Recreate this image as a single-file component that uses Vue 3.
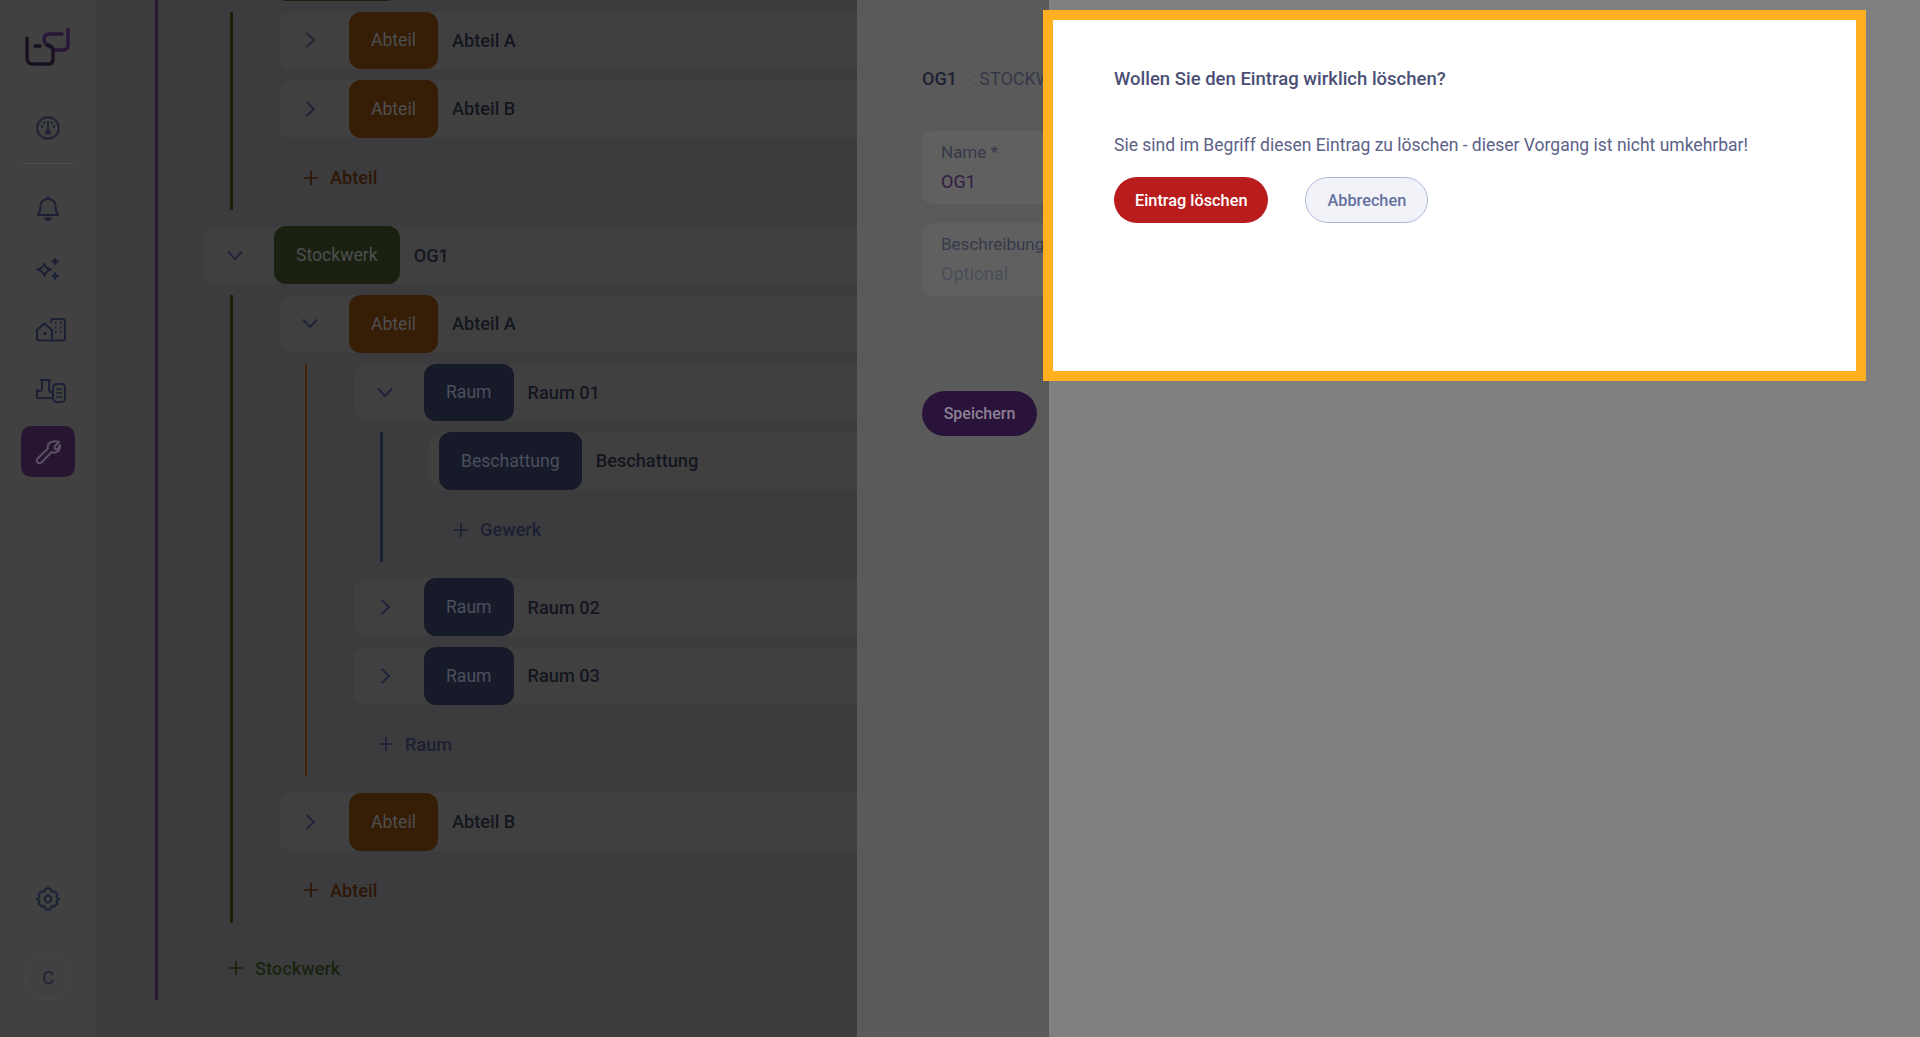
<script setup>
const navIcons = ["bell", "spark", "building", "plant"];
</script>

<template>
  <div class="app">
    <aside class="sidebar">
      <svg class="logo" width="48" height="40" viewBox="0 0 48 40" fill="none" stroke-width="3.400" stroke-linecap="round">
        <path d="M44 1V17Q44 22 39 22H30" stroke="#2a1638" />
        <path d="M38 6H26Q20 6 20 11Q20 17 27 19" stroke="#2a1638" />
        <path d="M3 10V30Q3 36 9 36H25Q29 36 29 31V23Q29 18 24 17" stroke="#191020" />
        <path d="M11 18H16" stroke="#191020" />
      </svg>

      <button class="nav-item dash" type="button">
        <svg width="26" height="26" viewBox="0 0 26 26" fill="none" stroke="#1c2135" stroke-width="2">
          <circle cx="13" cy="13" r="10.800" />
          <path d="M13 6V14" />
          <circle cx="13" cy="17" r="1.800" fill="#1c2135" />
          <path d="M7 11V12M19 11V12M9 7.500V8M17 7.500V8" stroke-linecap="round" />
        </svg>
      </button>
      <div class="divider"></div>

      <button v-for="name in navIcons" :key="name" class="nav-item" type="button">
        <svg v-if="name === 'bell'" width="26" height="28" viewBox="0 0 26 28" fill="none" stroke="#1c2135" stroke-width="2" stroke-linejoin="round">
          <path d="M3 21H23C21 18.500 20.500 17 20.500 12.500C20.500 8 17.500 5 13 5C8.500 5 5.500 8 5.500 12.500C5.500 17 5 18.500 3 21Z" />
          <path d="M13 2V5" />
          <path d="M10 24.500H16Q13 27.500 10 24.500Z" fill="#1c2135" />
        </svg>
        <svg v-else-if="name === 'spark'" width="26" height="26" viewBox="0 0 26 26" fill="none" stroke="#1c2135" stroke-width="2" stroke-linejoin="round">
          <path d="M9.500 7.500Q10.500 12.500 16 13.500Q10.500 15 9.500 20Q8.500 15 2 13.500Q8.500 12.500 9.500 7.500Z" />
          <path d="M20 2Q20.500 5 24 5.500Q20.500 6 20 9Q19.500 6 16.500 5.500Q19.500 5 20 2Z" fill="#1c2135" stroke-width="1" />
          <path d="M20 16.500Q20.500 19.500 24 20Q20.500 20.500 20 24Q19.500 20.500 16.500 20Q19.500 19.500 20 16.500Z" fill="#1c2135" stroke-width="1" />
        </svg>
        <svg v-else-if="name === 'building'" class="wide" width="30" height="24" viewBox="0 0 30 24" fill="none" stroke="#1c2135" stroke-width="2.200" stroke-linejoin="round">
          <path d="M1 12L8.500 5.500L16 12V22.500H3Q1 22.500 1 20.500Z" />
          <circle cx="9" cy="15.500" r="1.700" fill="#1c2135" stroke="none" />
          <path d="M15 5V3Q15 1 17 1H27Q29 1 29 3V20.500Q29 22.500 27 22.500H16" />
          <path d="M19 5H20.500M24 5H25.500M19 9.500H20.500M24 9.500H25.500M19 14H20.500M24 14H25.500" stroke-width="2.400" />
        </svg>
        <svg v-else class="wide" width="30" height="26" viewBox="0 0 30 26" fill="none" stroke="#1c2135" stroke-width="2" stroke-linejoin="round">
          <path d="M4 2H15M6 2V10Q6 13 3 13H1M1 11V20H16M13 2V11Q13 14 16 15" />
          <rect x="17" y="6" width="12" height="18" rx="3.500" />
          <path d="M20 11H26M20 15H26M20 19H26" stroke-width="1.500" />
        </svg>
      </button>

      <button class="nav-item active" type="button">
        <svg width="26" height="26" viewBox="0 0 26 26" fill="none" stroke="#5a5064" stroke-width="2" stroke-linejoin="round">
          <path d="M16 3Q21 1.500 24 3L19.500 7.500L20 10L22.500 10.500L25 6Q25.500 12 20.500 13.500Q18.500 14 16.500 13L6.500 23.500Q4.500 25 2.500 23.500Q1 21.500 2.500 19.500L13 9.500Q12 4.500 16 3Z" />
        </svg>
      </button>

      <button class="nav-item gear" type="button">
        <svg width="26" height="26" viewBox="0 0 26 26" fill="none" stroke="#1c2135" stroke-width="2" stroke-linejoin="round">
          <path d="M13 2L16 3.500L16.800 6L19.500 5.500L22.500 8.500L21.500 11L24 13L21.500 15L22.500 17.500L19.500 20.500L16.800 20L16 22.500L13 24L10 22.500L9.200 20L6.500 20.500L3.500 17.500L4.500 15L2 13L4.500 11L3.500 8.500L6.500 5.500L9.200 6L10 3.500Z" />
          <circle cx="13" cy="13" r="3.400" />
        </svg>
      </button>
      <div class="avatar">C</div>
    </aside>

    <main class="tree-area">
      <div class="tree">
        <div class="node">
          <!-- scrolled almost out of view, only the lower edge of the badge shows -->
          <div class="row"><span class="toggle"></span><span class="badge green stub"></span></div>
          <div class="children line-green">
            <div class="row"><span class="toggle"><svg class="chev" width="11" height="16" viewBox="0 0 11 16"><path d="M1.500 1L9 8L1.500 15" /></svg></span><span class="badge orange">Abteil</span><span class="name">Abteil A</span></div>
            <div class="row"><span class="toggle"><svg class="chev" width="11" height="16" viewBox="0 0 11 16"><path d="M1.500 1L9 8L1.500 15" /></svg></span><span class="badge orange">Abteil</span><span class="name">Abteil B</span></div>
            <div class="add add-orange"><svg class="plus" width="14" height="14" viewBox="0 0 14 14"><path d="M7 0V14M0 7H14" /></svg>Abteil</div>
          </div>
        </div>

        <div class="node">
          <div class="row"><span class="toggle"><svg class="chev" width="16" height="11" viewBox="0 0 16 11"><path d="M1 1.500L8 9L15 1.500" /></svg></span><span class="badge green">Stockwerk</span><span class="name">OG1</span></div>
          <div class="children line-green">
            <div class="node">
              <div class="row"><span class="toggle"><svg class="chev" width="16" height="11" viewBox="0 0 16 11"><path d="M1 1.500L8 9L15 1.500" /></svg></span><span class="badge orange">Abteil</span><span class="name">Abteil A</span></div>
              <div class="children line-orange">
                <div class="node">
                  <div class="row"><span class="toggle"><svg class="chev" width="16" height="11" viewBox="0 0 16 11"><path d="M1 1.500L8 9L15 1.500" /></svg></span><span class="badge navy">Raum</span><span class="name">Raum 01</span></div>
                  <div class="children line-navy">
                    <div class="row leaf"><span class="badge navy">Beschattung</span><span class="name">Beschattung</span></div>
                    <div class="add add-navy"><svg class="plus" width="14" height="14" viewBox="0 0 14 14"><path d="M7 0V14M0 7H14" /></svg>Gewerk</div>
                  </div>
                </div>
                <div class="row"><span class="toggle"><svg class="chev" width="11" height="16" viewBox="0 0 11 16"><path d="M1.500 1L9 8L1.500 15" /></svg></span><span class="badge navy">Raum</span><span class="name">Raum 02</span></div>
                <div class="row"><span class="toggle"><svg class="chev" width="11" height="16" viewBox="0 0 11 16"><path d="M1.500 1L9 8L1.500 15" /></svg></span><span class="badge navy">Raum</span><span class="name">Raum 03</span></div>
                <div class="add add-navy"><svg class="plus" width="14" height="14" viewBox="0 0 14 14"><path d="M7 0V14M0 7H14" /></svg>Raum</div>
              </div>
            </div>
            <div class="row"><span class="toggle"><svg class="chev" width="11" height="16" viewBox="0 0 11 16"><path d="M1.500 1L9 8L1.500 15" /></svg></span><span class="badge orange">Abteil</span><span class="name">Abteil B</span></div>
            <div class="add add-orange"><svg class="plus" width="14" height="14" viewBox="0 0 14 14"><path d="M7 0V14M0 7H14" /></svg>Abteil</div>
          </div>
        </div>

        <div class="add add-green"><svg class="plus" width="14" height="14" viewBox="0 0 14 14"><path d="M7 0V14M0 7H14" /></svg>Stockwerk</div>
      </div>
    </main>

    <section class="detail">
      <div class="detail-inner">
        <h2 class="detail-title"><strong>OG1</strong><span class="sep">:</span><span>STOCKWERK</span></h2>
        <div class="field">
          <label>Name *</label>
          <div class="value">OG1</div>
        </div>
        <div class="field">
          <label>Beschreibung</label>
          <div class="value placeholder">Optional</div>
        </div>
        <button class="save" type="button">Speichern</button>
      </div>
    </section>

    <section class="drawer">
      <div class="modal">
        <h3>Wollen Sie den Eintrag wirklich löschen?</h3>
        <p>Sie sind im Begriff diesen Eintrag zu löschen - dieser Vorgang ist nicht umkehrbar!</p>
        <div class="actions">
          <button class="btn danger" type="button">Eintrag löschen</button>
          <button class="btn cancel" type="button">Abbrechen</button>
        </div>
      </div>
    </section>
  </div>
</template>

<style>
html,
body {
  margin: 0;
  overflow: hidden;
}
</style>

<style scoped>
.app {
  display: flex;
  width: 1920px;
  height: 1037px;
  overflow: hidden;
  position: relative;
  font-family: Roboto, "Liberation Sans", sans-serif;
}

button {
  font-family: inherit;
  border: 0;
  padding: 0;
  background: transparent;
}

.sidebar {
  width: 96px;
  flex: none;
  box-sizing: border-box;
  background: #414141;
  display: flex;
  flex-direction: column;
  align-items: center;
  padding-top: 28px;
}
.logo {
  flex: none;
}
.nav-item {
  width: 54px;
  height: 51px;
  flex: none;
  margin-bottom: 10px;
  border-radius: 10px;
  display: flex;
  align-items: center;
  justify-content: center;
}
.nav-item .wide {
  margin-left: 6px;
}
.dash {
  margin-top: 34px;
  margin-bottom: 10px;
}
.divider {
  width: 54px;
  height: 1px;
  background: #4c4c4c;
  margin-bottom: 18px;
  flex: none;
}
.active {
  background: #271532;
  margin-top: 0;
}
.gear {
  margin-top: auto;
  margin-bottom: 30px;
}
.avatar {
  width: 46px;
  height: 46px;
  box-sizing: border-box;
  border: 1px solid #484848;
  border-radius: 50%;
  display: flex;
  align-items: center;
  justify-content: center;
  font-size: 18px;
  color: #1c2135;
  margin-bottom: 37px;
  flex: none;
}

.tree-area {
  width: 761px;
  flex: none;
  background: #3c3c3e;
  overflow: hidden;
}
.tree {
  margin: -57px 0 0 59px;
  border-left: 3px solid #2b1836;
  padding: 0 0 3.400px 46px;
}
.children {
  margin: 0 0 16.600px 26px;
  padding: 0 0 3.400px 46px;
  border-left: 3px solid;
}
.line-green {
  border-color: #182209;
}
.line-orange {
  border-left-width: 2px;
  padding-left: 47px;
  border-color: #3f2406;
}
.line-navy {
  border-color: #1a2033;
  padding-left: 46px;
}
.row {
  display: flex;
  align-items: center;
  height: 57.600px;
  margin-bottom: 11px;
  background: #404040;
  border-radius: 12px;
  width: 1000px;
}
.leaf {
  padding-left: 10px;
}
.toggle {
  width: 62px;
  margin-right: 8px;
  flex: none;
  display: flex;
  justify-content: center;
}
.chev {
  fill: none;
  stroke: #1f2338;
  stroke-width: 1.900;
}
.badge {
  height: 100%;
  display: flex;
  align-items: center;
  padding: 0 22px;
  border-radius: 12px;
  font-size: 17.600px;
  color: #4f4f52;
}
.stub {
  width: 125px;
  box-sizing: border-box;
}
.green {
  background: #1a2110;
}
.orange {
  background: #351d06;
}
.navy {
  background: #171b29;
  color: #4c4f5e;
}
.name {
  margin-left: 14px;
  font-size: 18.200px;
  font-weight: 500;
  color: #14161f;
}
.add {
  display: flex;
  align-items: center;
  height: 57.600px;
  padding-left: 25px;
  gap: 12px;
  font-size: 18.200px;
  font-weight: 500;
}
.plus {
  fill: none;
  stroke: currentColor;
  stroke-width: 1.700;
}
.add-orange {
  color: #2e1706;
}
.add-navy {
  color: #1c2033;
}
.add-green {
  color: #18240e;
}

.detail {
  width: 192px;
  flex: none;
  background: #5a5a5a;
  overflow: hidden;
}
.detail-inner {
  width: 700px;
  padding: 67px 0 0 65px;
  box-sizing: border-box;
}
.detail-title {
  margin: 0 0 40px;
  font-size: 18px;
  line-height: 24px;
  font-weight: 400;
  color: #353949;
  display: flex;
}
.detail-title strong {
  font-weight: 500;
  color: #1e2232;
}
.sep {
  color: #666;
  margin: 0 8px 0 10px;
}
.field {
  height: 73px;
  box-sizing: border-box;
  background: #606060;
  border-radius: 10px;
  padding: 10px 19px;
  margin-bottom: 19px;
  font-size: 17px;
}
.field label {
  display: block;
  line-height: 22px;
  color: #363a4a;
}
.value {
  margin-top: 8px;
  line-height: 22px;
  font-size: 18px;
  color: #341b40;
}
.placeholder {
  color: #494e58;
}
.save {
  display: block;
  margin-top: 95px;
  width: 115px;
  height: 45px;
  border-radius: 23px;
  background: #2a133a;
  color: #8b8093;
  font-size: 16px;
  font-weight: 500;
}

.drawer {
  flex: 1;
  background: #808080;
}
.modal {
  position: absolute;
  left: 1043px;
  top: 10px;
  width: 823px;
  height: 371px;
  box-sizing: border-box;
  border: 10px solid #ffb020;
  background: #fff;
  padding: 47px 61px 0;
}
.modal h3 {
  margin: 0;
  font-size: 18.500px;
  line-height: 24px;
  font-weight: 500;
  color: #4b4f75;
}
.modal p {
  margin: 42px 0 20px;
  font-size: 17.500px;
  line-height: 24px;
  color: #5c6188;
}
.actions {
  display: flex;
  gap: 37px;
}
.btn {
  height: 46px;
  box-sizing: border-box;
  border-radius: 23px;
  padding: 0 21px;
  font-size: 16.300px;
  font-weight: 500;
}
.danger {
  background: #b91c1c;
  color: #fff;
}
.cancel {
  background: #f1f3f8;
  border: 1px solid #b0b8d8;
  color: #6570a0;
}
</style>
